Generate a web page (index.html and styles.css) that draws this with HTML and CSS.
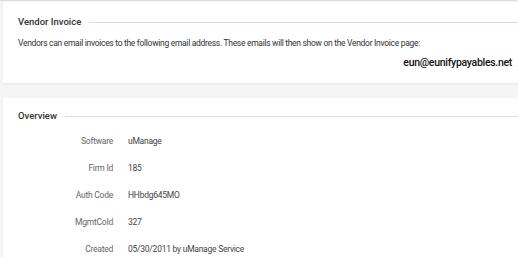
FILE: index.html
```html
<!DOCTYPE html>
<html lang="en">
<head>
  <meta charset="UTF-8">
  <title>Firm Details</title>
  <link rel="stylesheet" href="styles.css">
</head>
<body>
  <div class="page">
    <!-- Vendor Invoice -->
    <div class="card">
      <div class="section-title"><span>Vendor Invoice</span></div>
      <p class="note">Vendors can email invoices to the following email address. These emails will then show on the Vendor Invoice page:</p>
      <div class="email">eun@eunifypayables.net</div>
    </div>

    <!-- Overview -->
    <div class="card overview">
      <div class="section-title"><span>Overview</span></div>
      <div class="rows">
        <div class="label">Software</div><div class="value">uManage</div>
        <div class="label">Firm Id</div><div class="value">185</div>
        <div class="label">Auth Code</div><div class="value">HHbdg645MO</div>
        <div class="label">MgmtCoId</div><div class="value">327</div>
        <div class="label">Created</div><div class="value">05/30/2011 by uManage Service</div>
      </div>
    </div>
  </div>
</body>
</html>
```

FILE: styles.css
```css
body {
  margin: 0;
  background: #f5f5f5;
  border-top: 1px solid #dcdcdc;
  font-family: 'Roboto', sans-serif;
  color: #333;
  overflow: hidden;
}
.page {
  display: flex;
  flex-direction: column;
  gap: 15px;
  padding: 1px 0 0 3px;
}
.card {
  background: #fff;
  box-shadow: 0 1px 2px rgba(0,0,0,0.06);
  padding: 14px 6px 10px 15px;
  height: 57px;
}
.overview {
  height: auto;
  padding-top: 12px;
}
.section-title {
  display: flex;
  align-items: center;
  gap: 8px;
  font-size: 9.5px;
  font-weight: 500;
  line-height: 12px;
  color: #333;
}
.section-title::after {
  content: '';
  flex: 1;
  height: 1px;
  background: #d6ddef;
  margin-right: -6px;
}
.note {
  margin: 9px 0 0;
  font-size: 8.5px;
  line-height: 12px;
  letter-spacing: -0.3px;
  color: #333;
}
.email {
  margin-top: 7px;
  text-align: right;
  font-size: 10.5px;
  font-weight: 500;
  line-height: 14px;
  letter-spacing: -0.3px;
  color: #111;
}
.rows {
  display: grid;
  grid-template-columns: 95px auto;
  column-gap: 15px;
  row-gap: 15px;
  margin-top: 13px;
  font-size: 8.5px;
  line-height: 12px;
  letter-spacing: -0.25px;
}
.label {
  text-align: right;
  color: #666;
}
.value {
  color: #444;
}
```
